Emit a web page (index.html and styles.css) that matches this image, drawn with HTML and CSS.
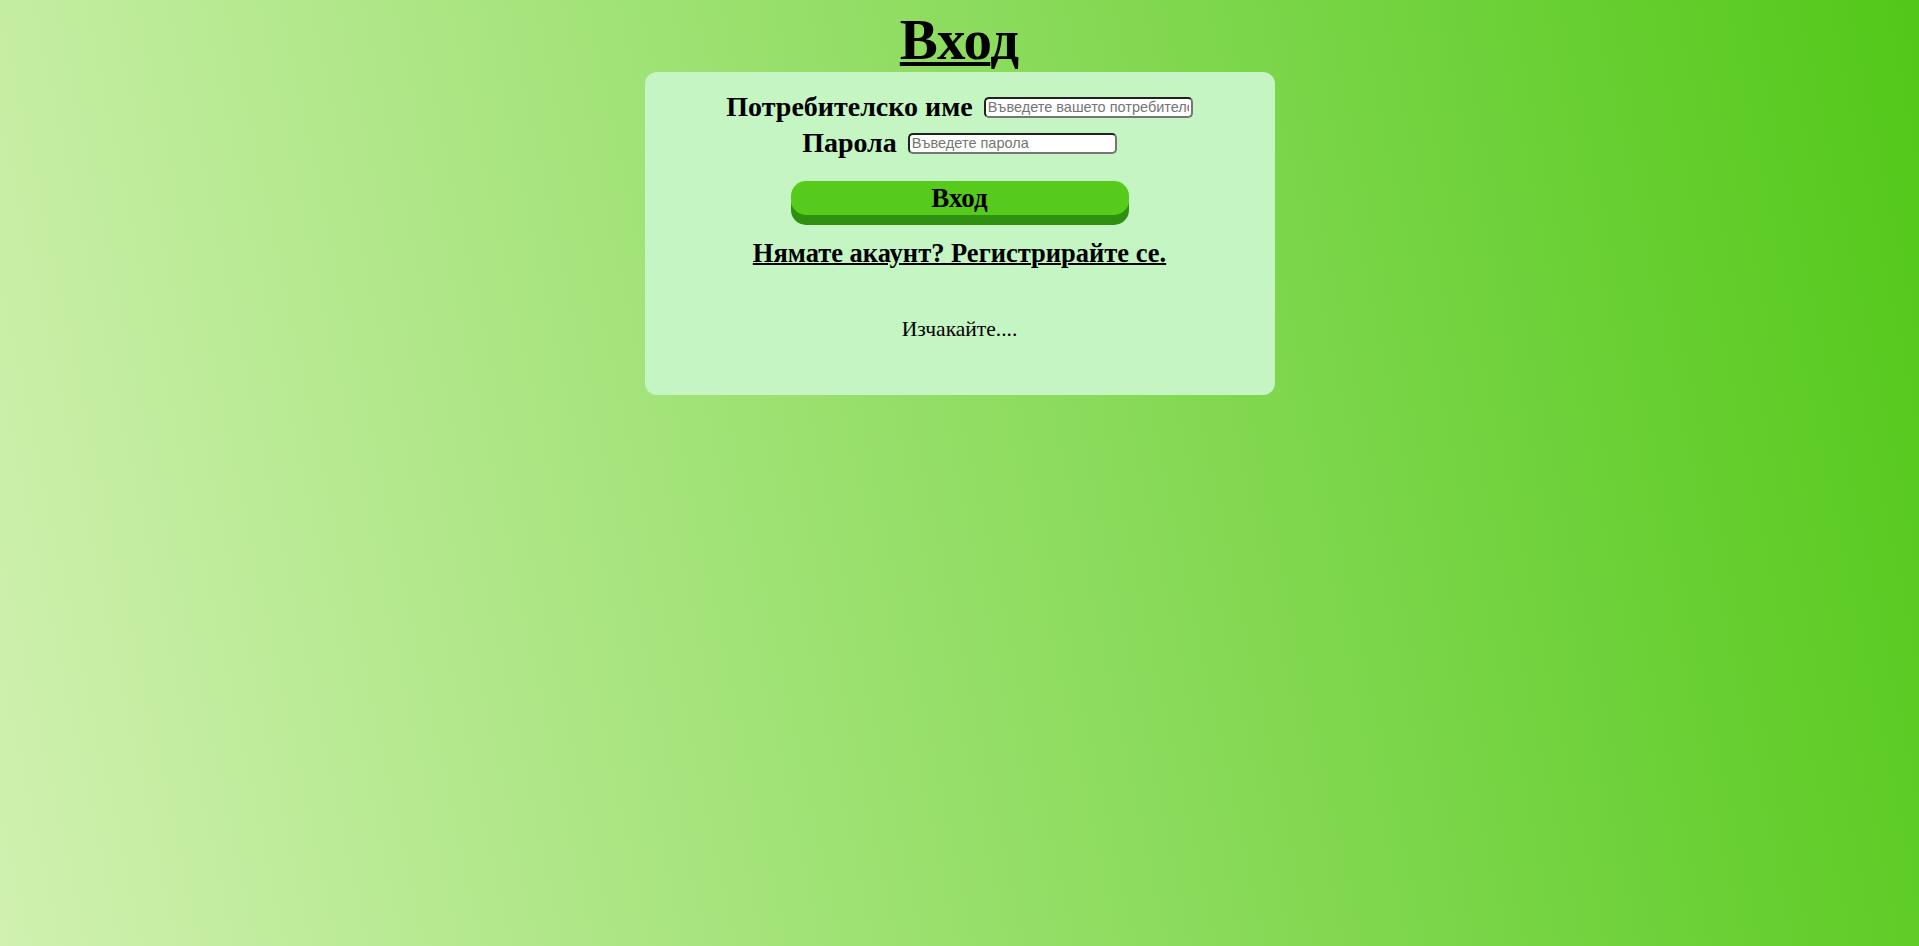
FILE: index.html
```html
<!DOCTYPE html>
<html lang="bg">
<head>
<meta charset="utf-8">
<title>Вход</title>
<link rel="stylesheet" href="styles.css">
</head>
<body>
<h1 class="title"><span class="title-u">Вхо</span>д</h1>
<main class="card">
  <div class="row">
    <label class="label" for="user">Потребителско име</label>
    <input class="field" id="user" type="text" placeholder="Въведете вашето потребителско име">
  </div>
  <div class="row">
    <label class="label" for="pass">Парола</label>
    <input class="field" id="pass" type="password" placeholder="Въведете парола">
  </div>
  <button class="btn" type="button">Вход</button>
  <a class="link" href="#">Нямате акаунт? Регистрирайте се.</a>
  <p class="wait">Изчакайте....</p>
</main>
</body>
</html>
```
FILE: styles.css
```css
html, body {
  height: 100%;
}
body {
  margin: 0;
  padding-top: 9px;
  box-sizing: border-box;
  background: linear-gradient(78deg, #d0f1b0 0%, #9fe274 40%, #53c819 100%);
  font-family: "Liberation Serif", "DejaVu Serif", serif;
  color: #000;
}
.title {
  margin: 0;
  text-align: center;
  font-size: 57px;
  line-height: 62px;
  font-weight: bold;
}
.title-u {
  text-decoration: underline;
  text-decoration-thickness: 4px;
  text-underline-offset: 3px;
}
.card {
  width: 630px;
  margin: 1px auto 0;
  background: #c4f5c3;
  border-radius: 12px;
  padding: 17px 0 0;
  height: 323px;
  box-sizing: border-box;
  display: flex;
  flex-direction: column;
  align-items: center;
}
.row {
  display: flex;
  align-items: center;
  justify-content: center;
  height: 36px;
  gap: 11px;
}
.label {
  font-weight: bold;
  font-size: 28px;
}
.field {
  width: 209px;
  height: 21px;
  box-sizing: border-box;
  border: 2px inset #767676;
  border-radius: 5px;
  padding: 0 2px;
  font-family: "Liberation Sans", Arial, sans-serif;
  font-size: 14.5px;
  background: #fff;
}
.field::placeholder {
  color: #757575;
}
.btn {
  margin-top: 20px;
  width: 338px;
  height: 34px;
  border: none;
  border-radius: 15px;
  background: #57cb1b;
  box-shadow: 0 10px 0 #30900f;
  font-family: "Liberation Serif", "DejaVu Serif", serif;
  font-weight: bold;
  font-size: 27px;
  line-height: 34px;
  color: #000;
  padding: 0;
}
.link {
  margin-top: 23px;
  font-weight: bold;
  font-size: 26.5px;
  color: #000;
  text-decoration: underline;
  text-decoration-thickness: 2px;
}
.wait {
  margin: 48px 0 0;
  font-size: 21.5px;
}
```
